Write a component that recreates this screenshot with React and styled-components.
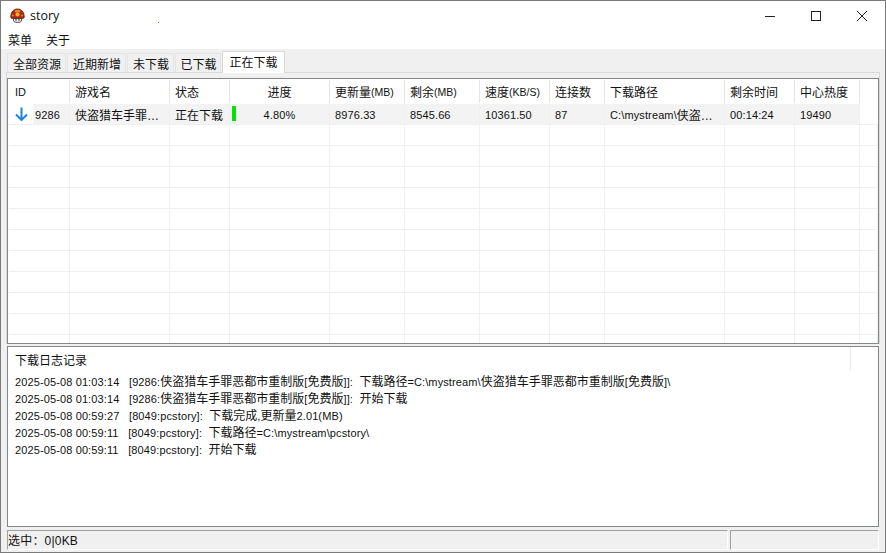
import React from "react";
import styled, { createGlobalStyle } from "styled-components";

const GlobalStyle = createGlobalStyle`
  html, body { margin: 0; padding: 0; background: #fff; }
  * { box-sizing: border-box; }
`;

const FONT = `"Liberation Sans", "Noto Sans CJK SC", sans-serif`;

const Window = styled.div`
  position: relative;
  width: 886px;
  height: 553px;
  border: 1px solid #7a7a7a;
  display: flex;
  flex-direction: column;
  font-family: ${FONT};
  font-size: 11px;
  letter-spacing: 0.12px;
  color: #111;
  background: #f0f0f0;
  overflow: hidden;
`;

const TitleBar = styled.div`
  height: 29px;
  display: flex;
  align-items: center;
  background: #fff;
  padding-left: 9px;
  flex: none;
`;

const AppTitle = styled.span`
  margin-left: 5px;
  font-size: 12.5px;
  letter-spacing: 0;
  font-family: "Open Sans", ${FONT};
`;

const Speck = styled.i`
  position: absolute;
  left: 157px;
  top: 21px;
  width: 1px;
  height: 1px;
  background: #a06a20;
`;

const Controls = styled.div`
  margin-left: auto;
  display: flex;
`;

const ControlBtn = styled.div`
  width: 46px;
  height: 29px;
  display: flex;
  align-items: center;
  justify-content: center;
`;

const MenuBar = styled.div`
  height: 19px;
  background: #fff;
  display: flex;
  gap: 14px;
  padding-left: 7px;
  align-items: center;
  flex: none;
  font-size: 12px;
  letter-spacing: 0;
`;

const TabStrip = styled.div`
  height: 22px;
  margin: 2px 5px 0;
  padding-left: 1px;
  border-bottom: 1px solid #d9d9d9;
  display: flex;
  align-items: flex-end;
  flex: none;
`;

const Tab = styled.div`
  height: ${(p) => (p.$active ? "22px" : "19px")};
  width: ${(p) => p.$w}px;
  display: flex;
  align-items: center;
  justify-content: center;
  background: ${(p) => (p.$active ? "#fff" : "#f0f0f0")};
  border: 1px solid ${(p) => (p.$active ? "#d9d9d9" : "#e4e4e4")};
  border-bottom: none;
  margin-bottom: ${(p) => (p.$active ? "-1px" : "0")};
  margin-right: ${(p) => (p.$active ? "0" : "1px")};
  padding: ${(p) => (p.$active ? "0 0 2px" : "1px 0 0 1px")};
  font-size: 12px;
  letter-spacing: 0;
  position: relative;
`;

const TabPage = styled.div`
  margin: 0 5px;
  padding-top: 5px;
  border-left: 1px solid #d9d9d9;
  border-right: 1px solid #d9d9d9;
  flex: none;
`;

const ListPane = styled.div`
  height: 266px;
  padding-left: 1px;
  border: 1px solid #82878c;
  background: #fff;
  overflow: hidden;
`;

const Row = styled.div`
  display: grid;
  grid-template-columns: 61px 100px 60px 100px 75px 75px 70px 55px 120px 70px 65px 1fr;
  height: ${(p) => (p.$header ? "25px" : "21px")};
  padding-top: ${(p) => (p.$header ? "1px" : "0")};
  background: ${(p) => (p.$selected ? "#f3f3f3" : "#fff")};
  border-bottom: 1px solid ${(p) => (p.$header ? "#fff" : "#f0f0f0")};
`;

const Cell = styled.div`
  display: flex;
  align-items: center;
  justify-content: ${(p) => (p.$center ? "center" : "flex-start")};
  padding-left: ${(p) => (p.$center ? 0 : 5)}px;
  padding-top: ${(p) => (p.$header ? 0 : 1)}px;
  border-right: 1px solid ${(p) => (p.$header ? "#e5e5e5" : "#f0f0f0")};
  white-space: pre;
  overflow: hidden;
  font-size: ${(p) => (p.$header ? "10.5px" : "11px")};
  letter-spacing: ${(p) => (p.$header ? "0" : "0.12px")};
`;

const IdCell = styled(Cell)`
  padding-left: 6px;
  font-size: 11px;
`;

const FillerCell = styled(Cell)`
  background: #fff;
  border-right: none;
`;

const HanText = styled.span`
  font-size: 12px;
  letter-spacing: 0;
`;

const ArrowBox = styled.span`
  width: 24px;
  height: 20px;
  background: #fff;
  margin: -1px 2px 0 -6px;
  display: flex;
  align-items: center;
  justify-content: center;
  flex: none;
`;

const ProgressCell = styled(Cell)`
  position: relative;
  padding-left: 0;
  justify-content: center;
`;

const ProgressBar = styled.i`
  position: absolute;
  left: 2px;
  top: 2px;
  bottom: 3px;
  background: #00e400;
`;

const LogPane = styled.div`
  height: 181px;
  margin: 2px 6px 0;
  border: 1px solid #82878c;
  background: #fff;
  flex: none;
  padding: 6px 7px;
  position: relative;
`;

const LogTitle = styled.div`
  height: 17px;
  line-height: 17px;
  margin-bottom: 4px;
  font-size: 12px;
  letter-spacing: 0;
`;

const LogHeaderEnd = styled.i`
  position: absolute;
  left: 842px;
  top: 0;
  height: 24px;
  width: 1px;
  background: #ececec;
`;

const LogLine = styled.div`
  height: 17px;
  line-height: 17px;
  white-space: pre;
`;

const StatusBar = styled.div`
  height: 20px;
  margin: 3px 0 0 6px;
  display: flex;
  flex: none;
`;

const StatusCell = styled.div`
  width: ${(p) => p.$w}px;
  border-top: 1px solid #a0a0a0;
  border-left: 1px solid #a0a0a0;
  border-right: 1px solid #fff;
  border-bottom: 1px solid #fff;
  margin-right: 2px;
  padding: 2px 0 0 0;
  line-height: 16px;
  font-size: 12px;
  letter-spacing: 0.2px;
`;

const columns = [
  { label: "游戏名" },
  { label: "状态" },
  { label: "进度", center: true },
  { label: "更新量(MB)" },
  { label: "剩余(MB)" },
  { label: "速度(KB/S)" },
  { label: "连接数" },
  { label: "下载路径" },
  { label: "剩余时间" },
  { label: "中心热度" },
];

const tabs = [
  { label: "全部资源", w: 59 },
  { label: "近期新增", w: 59 },
  { label: "未下载", w: 47 },
  { label: "已下载", w: 46 },
  { label: "正在下载", w: 63, active: true },
];

const logs = [
  "2025-05-08 01:03:14   [9286:侠盗猎车手罪恶都市重制版[免费版]]:  下载路径=C:\\mystream\\侠盗猎车手罪恶都市重制版[免费版]\\",
  "2025-05-08 01:03:14   [9286:侠盗猎车手罪恶都市重制版[免费版]]:  开始下载",
  "2025-05-08 00:59:27   [8049:pcstory]:  下载完成,更新量2.01(MB)",
  "2025-05-08 00:59:11   [8049:pcstory]:  下载路径=C:\\mystream\\pcstory\\",
  "2025-05-08 00:59:11   [8049:pcstory]:  开始下载",
];

// latin runs stay small, han runs get 12px like the original font pairing
const Mixed = ({ text }) =>
  text.split(/([\u4e00-\u9fff…]+)/).map((part, i) =>
    i % 2 ? <HanText key={i}>{part}</HanText> : part
  );

const AppIcon = () => (
  <svg width="15" height="15" viewBox="0 0 15 15">
    <path d="M.8 9C.8 4 3.6 1 7.5 1s6.7 3 6.7 8c0 1.2-1 1.6-2 1.6H2.800C1.800 10.600.8 10.200.8 9z" fill="#b5260c" stroke="#4a1408" strokeWidth=".8" />
    <path d="M4.500 2.200C6 1.500 9 1.500 10.500 2.200L9.800 4.500H5.200z" fill="#e8891e" />
    <circle cx="7.500" cy="6.500" r="2.100" fill="#f2b027" />
    <circle cx="2.800" cy="7.500" r="1" fill="#e8891e" />
    <circle cx="12.200" cy="7.500" r="1" fill="#e8891e" />
    <path d="M3.500 10.500h8V12c0 1.300-1 2.300-2.300 2.300H5.800C4.500 14.300 3.500 13.300 3.500 12z" fill="#f4f1ea" stroke="#2a2a2a" strokeWidth=".8" />
    <path d="M6 10.800v2M9 10.800v2" stroke="#2a2a2a" strokeWidth="1" />
  </svg>
);

const DownArrow = () => (
  <svg width="13" height="14" viewBox="0 0 13 14">
    <path d="M6.500 .5v12M1 7.500l5.500 5.500L12 7.500" fill="none" stroke="#1a84e0" strokeWidth="2" />
  </svg>
);

const WinIcon = ({ children }) => (
  <svg width="12" height="12" viewBox="0 0 12 12" fill="none" stroke="#222" strokeWidth="1">
    {children}
  </svg>
);

const emptyRows = Array.from({ length: 11 });
const emptyCells = Array.from({ length: 12 });

const App = () => (
  <>
    <GlobalStyle />
    <Window>
      <TitleBar>
        <AppIcon />
        <AppTitle>story</AppTitle>
        <Speck />
        <Controls>
          <ControlBtn>
            <WinIcon><path d="M1 6.500h10" /></WinIcon>
          </ControlBtn>
          <ControlBtn>
            <WinIcon><rect x="1.500" y="1.500" width="9" height="9" /></WinIcon>
          </ControlBtn>
          <ControlBtn>
            <WinIcon><path d="M1 1l10 10M11 1 1 11" /></WinIcon>
          </ControlBtn>
        </Controls>
      </TitleBar>
      <MenuBar>
        <span>菜单</span>
        <span>关于</span>
      </MenuBar>
      <TabStrip>
        {tabs.map((t) => (
          <Tab key={t.label} $w={t.w} $active={t.active}>{t.label}</Tab>
        ))}
      </TabStrip>
      <TabPage>
        <ListPane>
          <Row $header>
            <IdCell $header>ID</IdCell>
            {columns.map((c) => (
              <Cell key={c.label} $header $center={c.center}>
                <Mixed text={c.label} />
              </Cell>
            ))}
            <FillerCell />
          </Row>
          <Row $selected>
            <IdCell>
              <ArrowBox><DownArrow /></ArrowBox>
              9286
            </IdCell>
            <Cell><Mixed text="侠盗猎车手罪…" /></Cell>
            <Cell><Mixed text="正在下载" /></Cell>
            <ProgressCell>
              <ProgressBar style={{ width: `${Math.max(4.8 * 0.8, 3)}px` }} />
              4.80%
            </ProgressCell>
            <Cell>8976.33</Cell>
            <Cell>8545.66</Cell>
            <Cell>10361.50</Cell>
            <Cell>87</Cell>
            <Cell><Mixed text="C:\mystream\侠盗…" /></Cell>
            <Cell>00:14:24</Cell>
            <Cell>19490</Cell>
            <FillerCell />
          </Row>
          {emptyRows.map((_, r) => (
            <Row key={r}>
              {emptyCells.map((_, i) => <Cell key={i} />)}
            </Row>
          ))}
        </ListPane>
      </TabPage>
      <LogPane>
        <LogHeaderEnd />
        <LogTitle>下载日志记录</LogTitle>
        {logs.map((l, i) => (
          <LogLine key={i}><Mixed text={l} /></LogLine>
        ))}
      </LogPane>
      <StatusBar>
        <StatusCell $w={721}>选中：0|0KB</StatusCell>
        <StatusCell $w={149} />
      </StatusBar>
    </Window>
  </>
);

export default App;
